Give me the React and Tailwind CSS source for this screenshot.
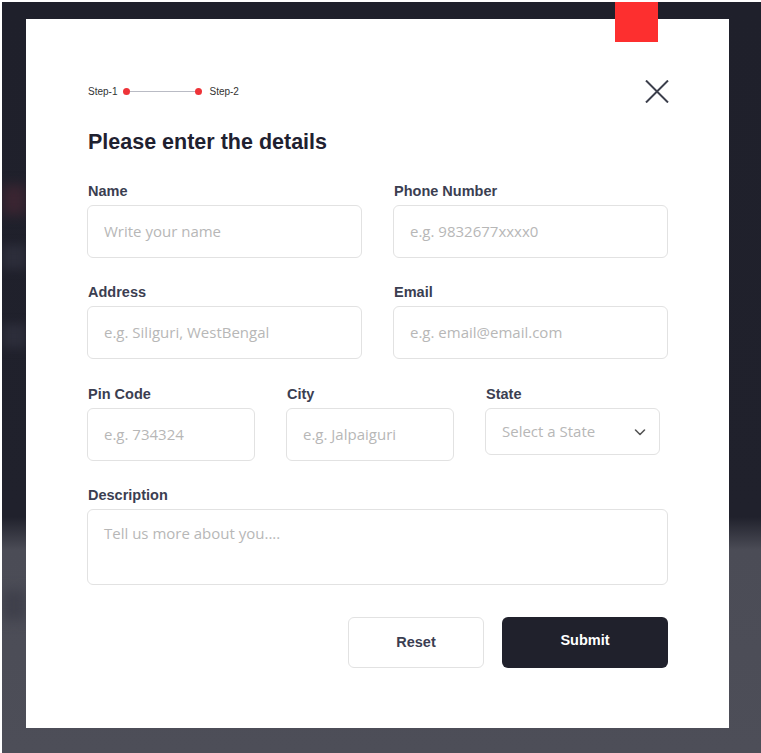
import React from "react";

const labelCls =
  "block h-[16px] leading-[16px] text-[14.5px] font-bold text-[#3b3e51] mb-[6px] pl-[1px]";
const inputCls =
  "w-full h-[53px] rounded-[6px] border border-[#e2e2e2] bg-white px-[16px] pb-[1px] text-[15px] text-[#333] placeholder:text-[#b7b7b7] outline-none";

function Field({ label, placeholder, className = "" }) {
  return (
    <div className={className}>
      <label className={labelCls}>{label}</label>
      <input
        className={inputCls}
        style={{ fontFamily: '"Open Sans", sans-serif' }}
        placeholder={placeholder}
      />
    </div>
  );
}

export default function App() {
  return (
    <div
      className="w-[761px] h-[753px] bg-white pt-[2px] pl-[2px] overflow-hidden"
      style={{ fontFamily: '"Liberation Sans", Arial, sans-serif' }}
    >
      <div className="relative w-[759px] h-[751px] overflow-hidden bg-[linear-gradient(to_bottom,#1f202b_0px,#20212c_515px,#4b4c56_548px,#4d4e58_751px)] pt-[17px] pl-[24px]">
        {/* blurred background hints */}
        <div className="absolute left-0 top-[183px] w-[24px] h-[30px] bg-[#3a2531] blur-[6px]" />
        <div className="absolute left-0 top-[243px] w-[24px] h-[24px] bg-[#2c2d3a] blur-[5px]" />
        <div className="absolute left-0 top-[322px] w-[24px] h-[24px] bg-[#2c2d3a] blur-[5px]" />
        <div className="absolute left-0 top-[588px] w-[24px] h-[30px] bg-[#3f404b] blur-[6px]" />

        {/* red square */}
        <div className="absolute left-[613px] top-0 w-[43px] h-[40px] bg-[#fd2f2f] z-10" />

        {/* modal */}
        <div className="relative w-[703px] h-[709px] bg-white px-[61px] pt-[61px]">
          <div className="flex items-center justify-between h-[23px]">
            <div className="flex items-center text-[10px] text-[#333] pl-[1px]">
              <span>Step-1</span>
              <span className="ml-[6px] w-[7px] h-[7px] rounded-full bg-[#ee3338]" />
              <span className="w-[65px] h-px bg-[#b9bbc4]" />
              <span className="w-[7px] h-[7px] rounded-full bg-[#ee3338]" />
              <span className="ml-[7px]">Step-2</span>
            </div>
            <svg width="24" height="23" viewBox="0 0 24 23" className="mr-[-1px]">
              <path
                d="M1 0.5 L23 22.5 M23 0.5 L1 22.5"
                stroke="#3c3f4c"
                strokeWidth="2"
                fill="none"
              />
            </svg>
          </div>

          <h1 className="mt-[26px] text-[21.5px] leading-[26px] font-bold text-[#1f2130] pl-[1px]">
            Please enter the details
          </h1>

          <div className="mt-[28px] grid grid-cols-2 gap-x-[31px]">
            <Field label="Name" placeholder="Write your name" />
            <Field label="Phone Number" placeholder="e.g. 9832677xxxx0" />
          </div>

          <div className="mt-[26px] grid grid-cols-2 gap-x-[31px]">
            <Field label="Address" placeholder="e.g. Siliguri, WestBengal" />
            <Field label="Email" placeholder="e.g. email@email.com" />
          </div>

          <div className="mt-[27px] flex gap-x-[31px]">
            <Field label="Pin Code" placeholder="e.g. 734324" className="w-[168px]" />
            <Field label="City" placeholder="e.g. Jalpaiguri" className="w-[168px]" />
            <div className="w-[175px]">
              <label className={labelCls}>State</label>
              <div
                className="flex items-center justify-between h-[47px] rounded-[6px] border border-[#e2e2e2] pl-[16px] pr-[12px] text-[15px] text-[#b7b7b7]"
                style={{ fontFamily: '"Open Sans", sans-serif' }}
              >
                <span>Select a State</span>
                <svg width="14" height="14" viewBox="0 0 14 14">
                  <path
                    d="M2.5 5 L7 9.5 L11.5 5"
                    stroke="#555"
                    strokeWidth="1.6"
                    fill="none"
                    strokeLinecap="round"
                    strokeLinejoin="round"
                  />
                </svg>
              </div>
            </div>
          </div>

          <div className="mt-[26px]">
            <label className={labelCls}>Description</label>
            <textarea
              className="block w-full h-[76px] resize-none rounded-[6px] border border-[#e2e2e2] px-[16px] pt-[12px] text-[15px] placeholder:text-[#b7b7b7] outline-none"
              style={{ fontFamily: '"Open Sans", sans-serif' }}
              placeholder="Tell us more about you...."
            />
          </div>

          <div className="mt-[32px] flex justify-end gap-x-[18px]">
            <button className="w-[136px] h-[51px] rounded-[6px] border border-[#e2e2e2] bg-white text-[14.5px] font-bold text-[#3b3e51]">
              Reset
            </button>
            <button className="w-[166px] h-[51px] rounded-[6px] bg-[#20212c] text-[14.5px] font-bold text-white pb-[3px]">
              Submit
            </button>
          </div>
        </div>
      </div>
    </div>
  );
}
